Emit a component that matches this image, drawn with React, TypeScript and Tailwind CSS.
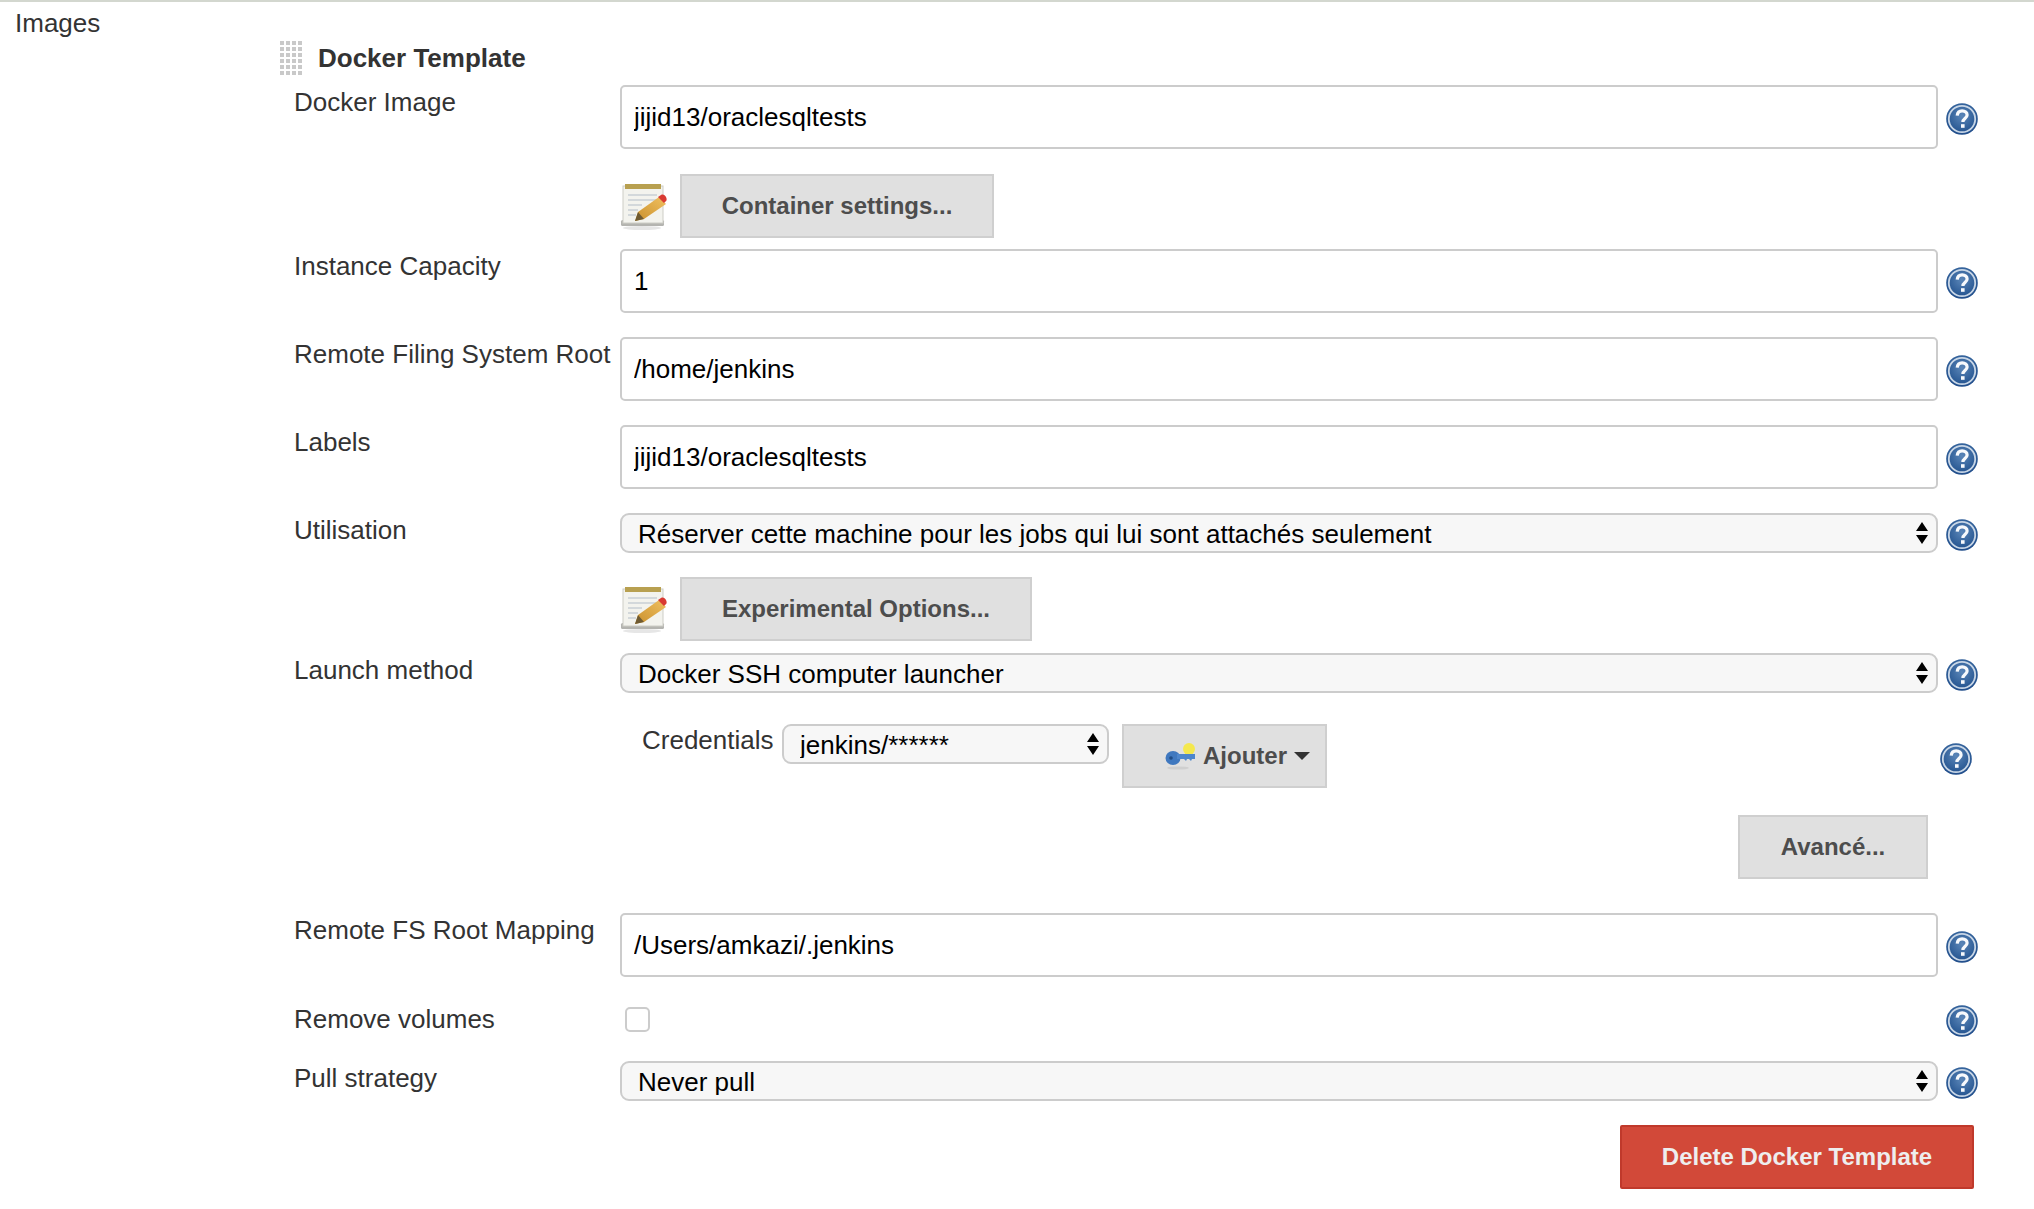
import React from "react";

function HelpIcon({ className = "" }: { className?: string }) {
  return (
    <svg width="32" height="32" viewBox="0 0 32 32" className={`shrink-0 ${className}`}>
      <defs>
        <radialGradient id="helpBlue" cx="50%" cy="40%" r="65%">
          <stop offset="0%" stopColor="#5b86b8" />
          <stop offset="65%" stopColor="#2f5e98" />
          <stop offset="100%" stopColor="#1b4786" />
        </radialGradient>
      </defs>
      <circle cx="16" cy="16" r="15.8" fill="url(#helpBlue)" />
      <circle cx="16" cy="16" r="13.2" fill="none" stroke="#c8d6e6" strokeWidth="1.8" />
      <path d="M11.2 12.6c.3-3.1 2.3-4.8 5-4.8 2.9 0 4.9 1.7 4.9 4.1 0 3.5-4.2 3.7-4.2 7" fill="none" stroke="#f7f9fc" strokeWidth="3.2" />
      <rect x="15" y="21.2" width="3.6" height="3.6" fill="#f7f9fc" />
    </svg>
  );
}

function NoteIcon() {
  return (
    <svg width="48" height="48" viewBox="0 0 48 48" className="shrink-0">
      <defs>
        <linearGradient id="pencilBody" x1="0" y1="1" x2="1" y2="0">
          <stop offset="0%" stopColor="#c98f2c" />
          <stop offset="100%" stopColor="#f0c060" />
        </linearGradient>
      </defs>
      <ellipse cx="22" cy="46" rx="19" ry="2" fill="#e6e6e6" />
      <rect x="1" y="38" width="43" height="6" rx="1.5" fill="#b4b4b0" />
      <rect x="3" y="4" width="40" height="37" fill="#f3f3ee" stroke="#cdcdc6" />
      <rect x="5" y="2" width="36" height="5" fill="#b8a050" />
      <path d="M8 13h29M8 18h29M8 23h14M8 28h10M8 33h8" stroke="#c9cfd5" strokeWidth="1.6" />
      <path d="M15 39l3-9 21-15 7 7-22 15z" fill="url(#pencilBody)" />
      <path d="M15 39l3-9 6 7z" fill="#6e5a32" />
      <path d="M38 15l3-2c2-1 4 0 5 2s1 4-1 5l-1 1z" fill="#d93a32" />
    </svg>
  );
}

function KeyIcon() {
  return (
    <svg width="32" height="32" viewBox="0 0 32 32" className="shrink-0">
      <ellipse cx="13" cy="28" rx="11" ry="1.6" fill="#cfcfcf" />
      <circle cx="24" cy="9" r="6" fill="#f4e84e" />
      <ellipse cx="8" cy="18" rx="7.5" ry="7" fill="#3f78bf" />
      <path d="M12 14h18v5h-3l-1 2-2-2h-2l-1 2-2-2h-7z" fill="#4d86cc" />
      <circle cx="6" cy="18" r="1.8" fill="#1f4c86" />
    </svg>
  );
}

function GripIcon() {
  const dots = [];
  for (let r = 0; r < 6; r++) {
    for (let c = 0; c < 4; c++) {
      dots.push(<rect key={`${r}-${c}`} x={c * 6} y={r * 6} width="4" height="4" fill="#c9c9c9" />);
    }
  }
  return (
    <svg width="22" height="34" viewBox="0 0 22 34" className="shrink-0">
      {dots}
    </svg>
  );
}

function Row({ label, className = "", children, help = true }: { label?: string; className?: string; children: React.ReactNode; help?: boolean }) {
  return (
    <div className={`flex pl-[294px] ${className}`}>
      <label className="w-[326px] shrink-0 h-[34px] leading-[34px] text-[#333]">{label}</label>
      <div className="w-[1318px] shrink-0">{children}</div>
      {help && <HelpIcon className="ml-2 mt-[3px] self-center" />}
    </div>
  );
}

function TextBox({ value }: { value: string }) {
  return (
    <input
      type="text"
      readOnly
      value={value}
      className="block w-full h-[64px] px-[12px] border-2 border-[#ccc] rounded-[5px] bg-white text-black text-[26px] outline-none"
    />
  );
}

function SelectBox({ value, className = "" }: { value: string; className?: string }) {
  return (
    <div className={`relative h-[40px] ${className}`}>
      <select
        defaultValue={value}
        className="block w-full h-full pl-4 pr-8 pb-[4px] border-2 border-[#ccc] rounded-[9px] bg-[#f7f7f7] text-black text-[26px] appearance-none outline-none"
      >
        <option>{value}</option>
      </select>
      <svg width="12" height="22" viewBox="0 0 12 22" className="absolute right-[10px] top-[9px] pointer-events-none">
        <path d="M6 0l6 9H0zM0 13h12l-6 9z" fill="#000" />
      </svg>
    </div>
  );
}

function GrayButton({ children, className = "" }: { children: React.ReactNode; className?: string }) {
  return (
    <button
      type="button"
      className={`h-[64px] border-2 border-[#cfcfcf] bg-[#e0e0e0] text-[#4d4d4d] text-[24px] font-bold flex items-center justify-center ${className}`}
    >
      {children}
    </button>
  );
}

export default function App() {
  return (
    <div className="w-[2034px] h-[1209px] bg-white overflow-hidden text-[26px] font-['Liberation_Sans',Arial,sans-serif]">
      <div className="h-[2px] bg-[#d3d7cf]" />
      <div className="pl-[15px] pt-[5px] h-[38px] leading-8 text-[#333]">Images</div>
      <div className="flex items-center h-[36px] pl-[280px]">
        <GripIcon />
        <span className="ml-[16px] pt-[1px] font-bold text-[#333]">Docker Template</span>
      </div>

      <Row label="Docker Image" className="mt-[9px]">
        <TextBox value="jijid13/oraclesqltests" />
      </Row>
      <Row className="mt-[25px]" help={false}>
        <div className="flex items-center">
          <NoteIcon />
          <GrayButton className="ml-[12px] w-[314px]">Container settings...</GrayButton>
        </div>
      </Row>
      <Row label="Instance Capacity" className="mt-[11px]">
        <TextBox value="1" />
      </Row>
      <Row label="Remote Filing System Root" className="mt-[24px]">
        <TextBox value="/home/jenkins" />
      </Row>
      <Row label="Labels" className="mt-[24px]">
        <TextBox value="jijid13/oraclesqltests" />
      </Row>
      <Row label="Utilisation" className="mt-[24px]">
        <SelectBox value="Réserver cette machine pour les jobs qui lui sont attachés seulement" />
      </Row>
      <Row className="mt-[24px]" help={false}>
        <div className="flex items-center">
          <NoteIcon />
          <GrayButton className="ml-[12px] w-[352px]">Experimental Options...</GrayButton>
        </div>
      </Row>
      <Row label="Launch method" className="mt-[12px]">
        <SelectBox value="Docker SSH computer launcher" />
      </Row>

      <div className="flex items-start mt-[31px] pl-[642px]">
        <span className="w-[140px] shrink-0 h-8 leading-8 text-[#333]">Credentials</span>
        <SelectBox value="jenkins/******" className="w-[327px]" />
        <GrayButton className="ml-[13px] w-[205px] pl-[26px]">
          <KeyIcon />
          <span className="ml-[6px]">Ajouter</span>
          <span className="ml-[7px] border-x-[8px] border-x-transparent border-t-[8px] border-t-[#333]" />
        </GrayButton>
        <HelpIcon className="ml-[613px] mt-[19px]" />
      </div>

      <div className="flex justify-end mt-[27px] w-[1928px]">
        <GrayButton className="w-[190px]">Avancé...</GrayButton>
      </div>

      <Row label="Remote FS Root Mapping" className="mt-[34px]">
        <TextBox value="/Users/amkazi/.jenkins" />
      </Row>
      <Row label="Remove volumes" className="mt-[25px] h-[35px]">
        <input type="checkbox" className="block ml-[5px] mt-[5px] w-[25px] h-[25px] appearance-none border-2 border-[#ccc] rounded-[5px] bg-white" />
      </Row>
      <Row label="Pull strategy" className="mt-[24px]">
        <SelectBox value="Never pull" />
      </Row>

      <div className="flex justify-end mt-[24px] w-[1974px]">
        <button type="button" className="w-[354px] h-[64px] rounded-[2px] border-2 border-[#c0392b] bg-[#d24939] text-[#eee] text-[24px] font-bold">
          Delete Docker Template
        </button>
      </div>
    </div>
  );
}
